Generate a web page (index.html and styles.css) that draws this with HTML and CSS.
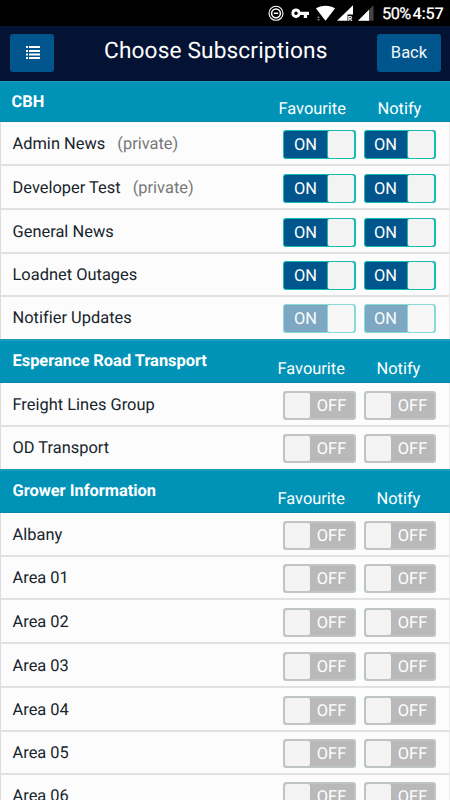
FILE: index.html
```html
<!DOCTYPE html>
<html lang="en">
<head>
<meta charset="utf-8">
<title>Choose Subscriptions</title>
<link rel="stylesheet" href="styles.css">
</head>
<body>
<div class="status">
  <svg class="status-icons" width="108" height="26" viewBox="0 0 108 26">
    <circle cx="8" cy="13.3" r="7" fill="none" stroke="#fff" stroke-width="1.1"/>
    <circle cx="8" cy="13.3" r="4.4" fill="none" stroke="#fff" stroke-width="1.5"/>
    <path d="M5.8 13.3h4.4" stroke="#fff" stroke-width="1.5"/>
    <path fill="#fff" fill-rule="evenodd" d="M28 8.5a4.7 4.7 0 0 1 4.4 3.2H41v3.4h-1.9v2.8h-3.3v-2.8h-3.4A4.7 4.7 0 1 1 28 8.5zm0 3a1.8 1.8 0 1 0 0 3.6 1.8 1.8 0 0 0 0-3.6z"/>
    <path fill="#fff" d="M48 8.6C52.8 4.9 62.2 4.9 67 8.6L57.5 20.8z"/>
    <path fill="#777" d="M49 18l1.5-2 1.5 2zM49 19h3l-1.5 2z"/>
    <path fill="#fff" d="M85 5.2v9.3h-5.5v6.3H69z"/>
    <text x="79.8" y="21" class="roaming">R</text>
    <path fill="#444" d="M105.5 5.2v15.6H90z"/>
    <path fill="#fff" d="M101 9.7v11.1H90z"/>
  </svg>
  <span class="battery">50%</span><span class="clock">4:57</span>
</div>
<header class="bar">
  <button class="btn menu" aria-label="Menu">
    <svg width="14" height="14" viewBox="0 0 14 14"><path fill="#fff" d="M0 0h2v2H0zM3 0h11v2H3zM0 4h2v2H0zM3 4h11v2H3zM0 7.5h2v2H0zM3 7.5h11v2H3zM0 11h2v2H0zM3 11h11v2H3z"/></svg>
  </button>
  <h1>Choose Subscriptions</h1>
  <button class="btn back">Back</button>
</header>
<main id="list"></main>
<script src="app.js"></script>
</body>
</html>
```
FILE: styles.css
```css
* { box-sizing: border-box; }
body { margin: 0; height: 800px; overflow: hidden; background: #fcfcfc; font-family: Roboto, sans-serif; color: #17242c; text-rendering: geometricPrecision; }
.status { height: 26px; background: #000; display: flex; color: #fff; font-size: 16.3px; line-height: 28px; white-space: nowrap; }
.status-icons { margin-left: 268px; flex: none; }
.battery { margin-left: 6px; width: 30.5px; letter-spacing: -0.5px; -webkit-text-stroke: 0.25px #fff; }
.clock { font-weight: 500; letter-spacing: -0.25px; }
.roaming { font: bold 7px Roboto, sans-serif; fill: #fff; }
.bar { height: 55px; background: #041333; display: flex; align-items: flex-start; padding: 8px 9px 0 10px; }
.btn { border: 0; border-radius: 3px; background: #00558c; color: #f2f5f8; font: 16.5px/36px Roboto, sans-serif; height: 38px; padding: 0; }
.menu { width: 44px; display: flex; align-items: center; justify-content: center; padding-left: 2px; }
.back { width: 64px; }
h1 { flex: 1; margin: 0 0 0 50px; color: #fff; font-size: 22.7px; line-height: 34px; font-weight: 400; letter-spacing: 0.13px; white-space: nowrap; }
#list { height: 719px; overflow: hidden; }
.group { height: 44px; background: #0093b7; border-top: 2px solid #1c9dbb; border-bottom: 1px solid #0787a7; color: #fff; display: grid; grid-template-columns: 277px 99px 1fr; font-size: 16.4px; }
.group:first-child { height: 41px; border-top-width: 1px; }
.group b { padding-left: 12.5px; line-height: 41px; font-weight: 700; }
.group span { padding-left: 0.5px; line-height: 58px; }
.group:first-child span { padding-left: 1.5px; line-height: 56px; }
.group:first-child b { padding-left: 11.5px; line-height: 41px; }
.row { height: 44px; background: #fcfcfc; border-bottom: 2px solid #e1e1e1; border-left: 1px solid #dcdcdc; border-right: 1px solid #ececec; display: grid; grid-template-columns: 282px 81px 72px; align-items: start; padding-top: 8px; }
.row.short { height: 43px; padding-top: 7px; }
.row.last { height: 42px; border-bottom: 0; padding-top: 7px; }
.name { padding-left: 11.5px; line-height: 29px; font-size: 16.4px; letter-spacing: 0.02px; white-space: nowrap; }
.name i { font-style: normal; color: #777; margin-left: 12px; }
.switch { display: flex; width: 73px; height: 29px; border-radius: 3px; background: #b9b9b9; border: 2px solid #bfc5c4; color: #fff; font-size: 16.4px; line-height: 28px; }
.switch + .switch { width: 72px; }
.switch em { font-style: normal; flex: 1; text-align: center; padding-right: 1px; }
.switch + .switch em { padding-right: 0; }
.knob { width: 25px; height: 25px; background: #f3f3f3; border-radius: 2px; }
.on { background: #00558c; border: 1px solid #12bdb0; border-right-width: 2px; }
.on em { line-height: 29px; padding-right: 0; }
.switch.on + .switch.on em { padding-right: 1px; }
.on .knob { width: 27px; height: 27px; border-left: 1px solid #12bdb0; order: 1; }
.disabled { opacity: 0.5; }
```
FILE: app.js
```js
const groups = [
  { title: 'CBH', on: true, items: ['Admin News|p', 'Developer Test|p', 'General News', 'Loadnet Outages', 'Notifier Updates'] },
  { title: 'Esperance Road Transport', items: ['Freight Lines Group', 'OD Transport'] },
  { title: 'Grower Information', items: ['Albany', 'Area 01', 'Area 02', 'Area 03', 'Area 04', 'Area 05', 'Area 06'] }
];
const shortRows = ['Loadnet Outages', 'Area 01', 'Area 05'];

function toggle(on, disabled) {
  return `<div class="switch${on ? ' on' : ''}${disabled ? ' disabled' : ''}"><span class="knob"></span><em>${on ? 'ON' : 'OFF'}</em></div>`;
}

document.getElementById('list').innerHTML = groups.map(g =>
  `<div class="group"><b>${g.title}</b><span>Favourite</span><span>Notify</span></div>` +
  g.items.map((item, i) => {
    const [name, priv] = item.split('|');
    const size = i === g.items.length - 1 ? ' last' : shortRows.includes(name) ? ' short' : '';
    const sw = toggle(g.on, name === 'Notifier Updates');
    return `<div class="row${size}"><div class="name">${name}${priv ? '<i>(private)</i>' : ''}</div>${sw}${sw}</div>`;
  }).join('')
).join('');
```
